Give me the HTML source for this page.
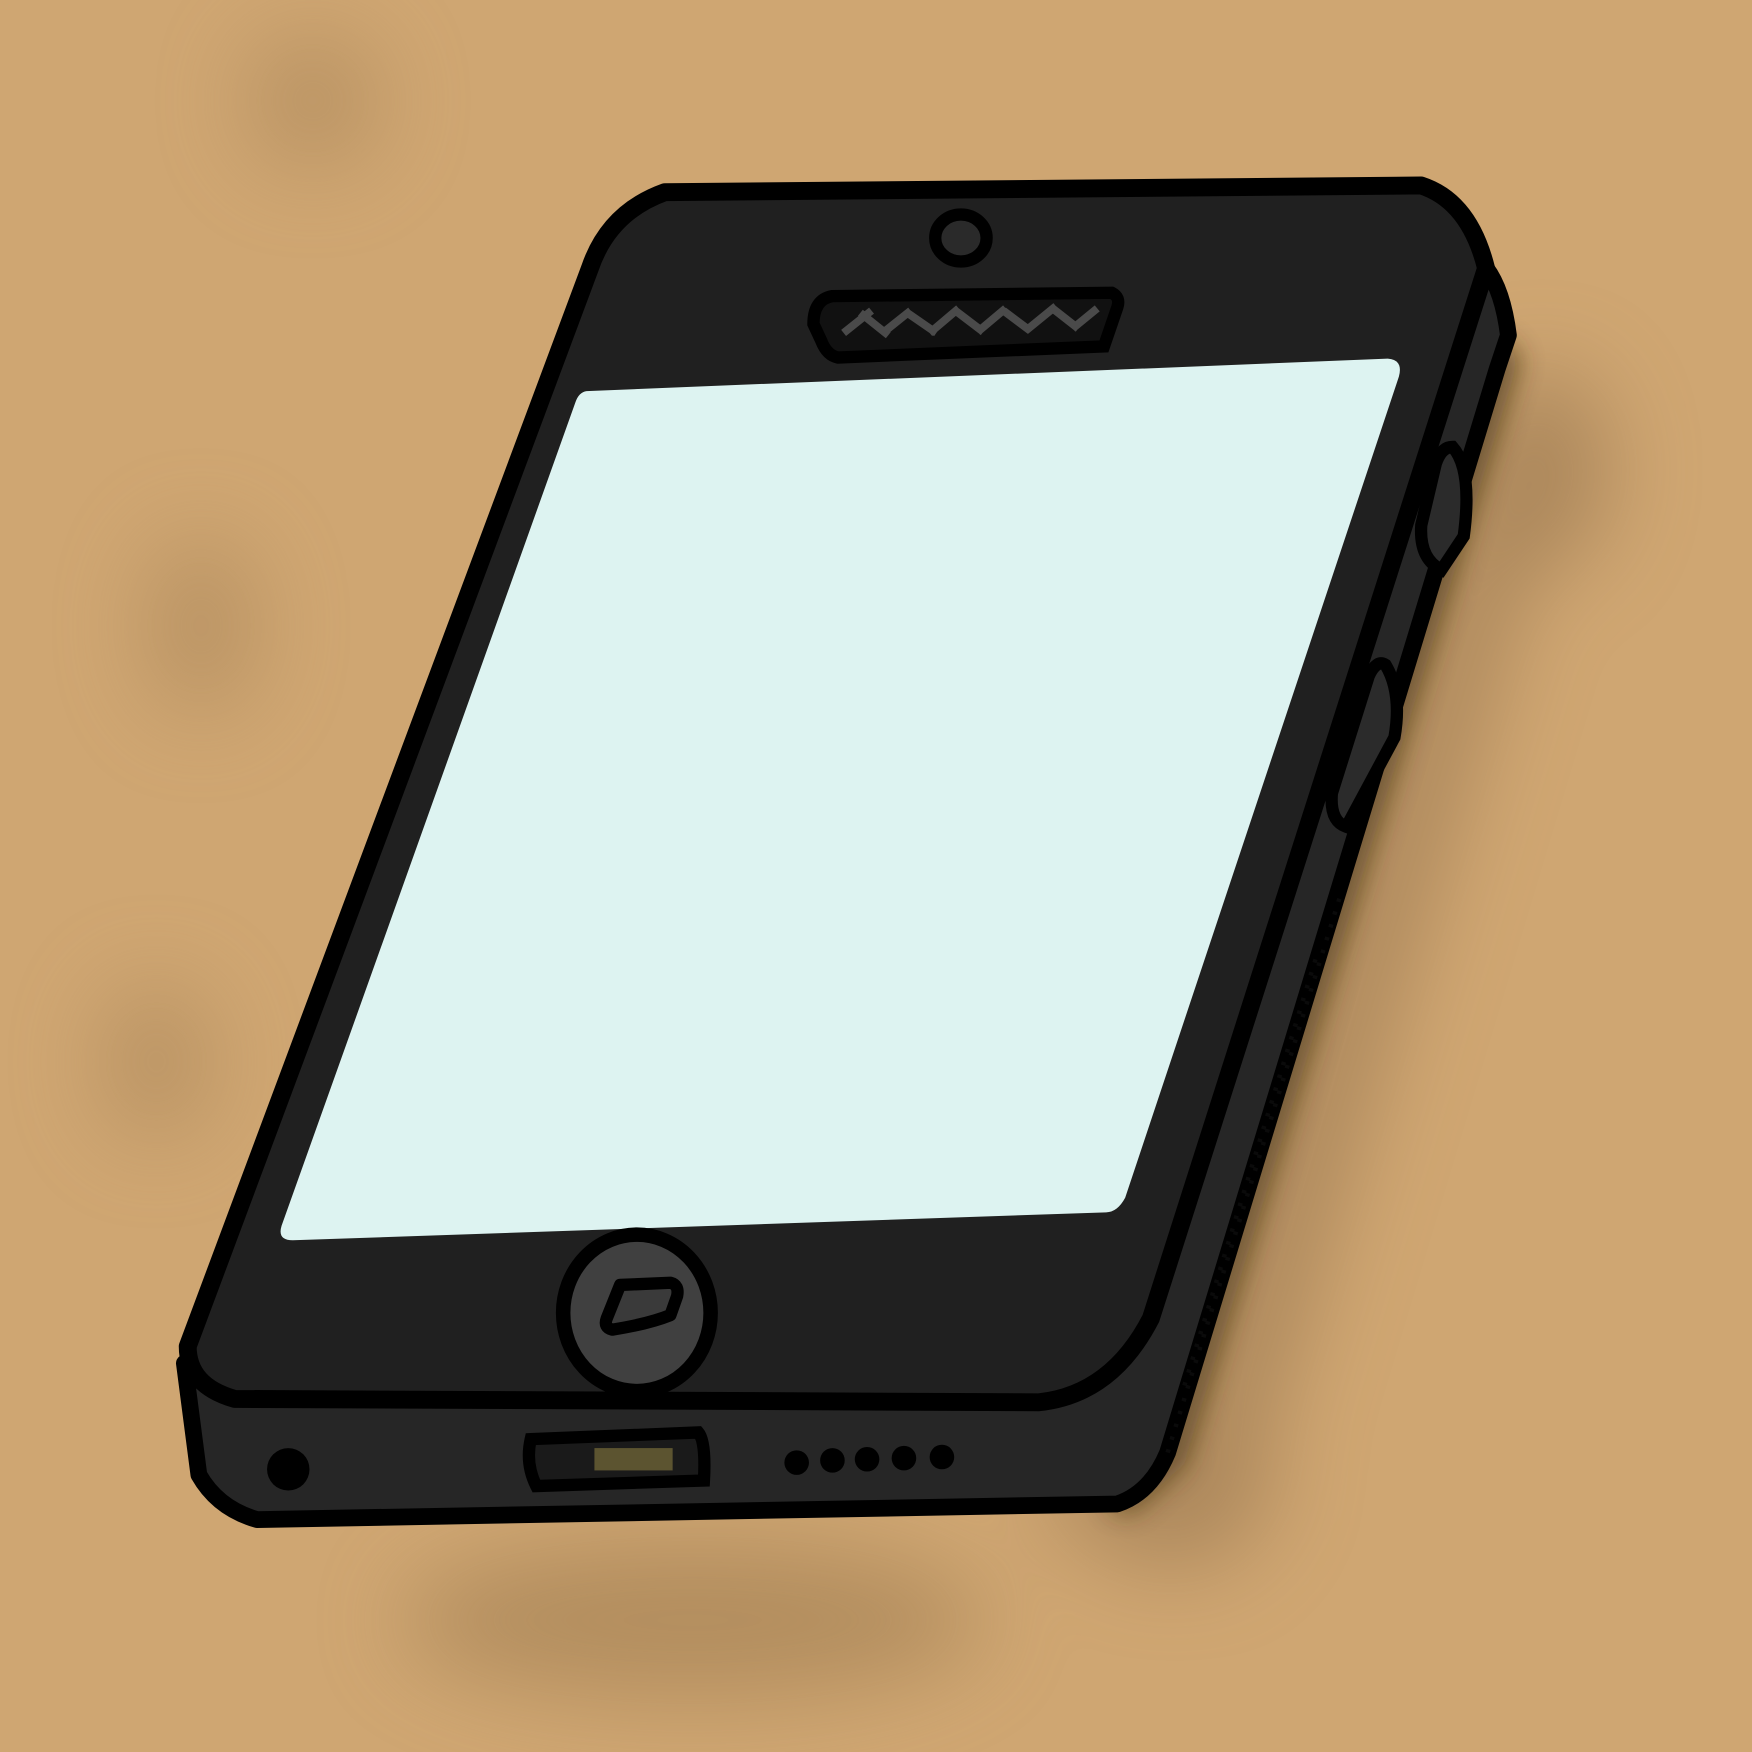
<!DOCTYPE html>
<html><head><meta charset="utf-8"><style>
html,body{margin:0;padding:0;background:#cfa672;}
svg{display:block;}
</style></head><body>
<svg width="1752" height="1752" viewBox="0 0 1568 1568" xmlns="http://www.w3.org/2000/svg">
<defs>
<filter id="b1" x="-50%" y="-50%" width="200%" height="200%"><feGaussianBlur stdDeviation="40"/></filter>
<filter id="b2" x="-50%" y="-50%" width="200%" height="200%"><feGaussianBlur stdDeviation="12"/></filter>
</defs>
<rect width="1568" height="1568" fill="#cfa672"/>
<g filter="url(#b1)" opacity="0.55">
<ellipse cx="280" cy="90" rx="60" ry="60" fill="#a88458"/>
<ellipse cx="180" cy="560" rx="50" ry="80" fill="#a88458"/>
<ellipse cx="140" cy="950" rx="50" ry="70" fill="#a88458"/>
<ellipse cx="620" cy="1450" rx="260" ry="70" fill="#9c7a50"/>
<ellipse cx="1380" cy="420" rx="60" ry="90" fill="#8f6e48"/>
<path d="M1330 350 L1400 400 L1100 1400 L1000 1400 Z" fill="#8f6e48"/>
<ellipse cx="1040" cy="1330" rx="100" ry="60" fill="#8f6e48"/>
</g>
<g filter="url(#b2)" opacity="0.7">
<path d="M1340 300 L1360 320 L1060 1310 L1010 1355 L990 1345 L1040 1300 Z" fill="#3a2a10"/>
</g>
<path d="M165 1220 L178 1320 Q195 1350 230 1360 L1000 1346 Q1030 1336 1045 1300 L1340 330 L1350 300 Q1345 260 1330 240 L1030 1180 Q990 1250 930 1255 L210 1250 Q175 1240 165 1220 Z" fill="#262626" stroke="#000" stroke-width="15" stroke-linejoin="round"/>
<path d="M595 172 L1272 166 Q1315 180 1330 240 L1030 1180 Q995 1248 930 1255 L210 1252 Q168 1240 168 1205 L528 240 Q545 190 595 172 Z" fill="#202020" stroke="#000" stroke-width="16" stroke-linejoin="round"/>
<path d="M1045 1300 L1200 800 M1060 1240 L1180 850" stroke="#111" stroke-width="4" stroke-dasharray="3 9" opacity="0.6"/>
<path d="M525 350 L1242 321 Q1256 322 1252 337 L1007 1072 Q1000 1085 990 1085 L262 1110 Q248 1110 252 1097 L515 360 Q518 351 525 350 Z" fill="#ddf3f1"/>
<ellipse cx="860" cy="213" rx="23" ry="21" fill="#2a2a2a" stroke="#000" stroke-width="11"/>
<path d="M745 265 L995 262 Q1003 266 1000 275 L988 310 L750 320 Q740 318 735 305 L728 290 Q728 268 745 265 Z" fill="#111" stroke="#000" stroke-width="11"/>
<path d="M755 298 L780 278 M770 280 L795 300 M790 298 L815 278 M812 280 L838 298 M832 298 L858 276 M855 278 L880 297 M875 297 L900 276 M898 278 L922 296 M918 296 L945 274 M942 276 L965 294 M960 294 L982 276" fill="none" stroke="#4a4a4a" stroke-width="7"/>
<ellipse cx="570" cy="1175" rx="66" ry="70" fill="#404040" stroke="#000" stroke-width="13"/>
<path d="M555 1150 L600 1148 Q608 1150 606 1160 L600 1177 Q580 1185 548 1190 Q540 1188 543 1180 Z" fill="#3a3a3a" stroke="#000" stroke-width="11" stroke-linejoin="round"/>
<path d="M475 1288 L625 1282 Q632 1290 630 1325 L480 1330 Q470 1310 475 1288 Z" fill="#1a1a1a" stroke="#000" stroke-width="11"/>
<rect x="532" y="1296" width="70" height="20" fill="#5c5430"/>
<circle cx="713" cy="1309" r="11" fill="#000"/>
<circle cx="745" cy="1307" r="11" fill="#000"/>
<circle cx="776" cy="1306" r="11" fill="#000"/>
<circle cx="809" cy="1305" r="11" fill="#000"/>
<circle cx="843" cy="1304" r="11" fill="#000"/>
<circle cx="258" cy="1315" r="19" fill="#000"/>
<path d="M1300 400 Q1318 420 1310 480 L1290 510 Q1270 500 1272 470 L1285 415 Q1290 400 1300 400 Z" fill="#2b2b2b" stroke="#000" stroke-width="11"/>
<path d="M1240 595 Q1255 620 1248 660 L1205 740 Q1190 735 1192 710 L1225 605 Q1232 590 1240 595 Z" fill="#2b2b2b" stroke="#000" stroke-width="11"/>
</svg>
</body></html>
